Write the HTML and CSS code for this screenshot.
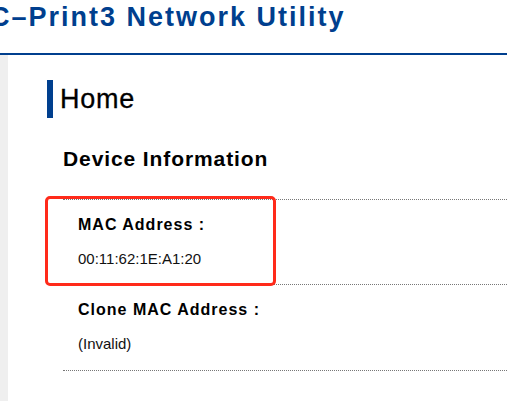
FILE: index.html
```html
<!DOCTYPE html>
<html lang="en">
<head>
<meta charset="utf-8">
<title>C-Print3 Network Utility</title>
<link rel="stylesheet" href="styles.css">
</head>
<body>
<header class="topbar">
  <h1 class="app-title">C–Print3 Network Utility</h1>
</header>
<div class="layout">
  <aside class="sidebar"></aside>
  <main class="main">
    <h2 class="page-title">Home</h2>
    <section class="section">
      <h3 class="section-title">Device Information</h3>
      <div class="info-list">
        <div class="info-item">
          <div class="info-label">MAC Address :</div>
          <div class="info-value">00:11:62:1E:A1:20</div>
        </div>
        <div class="info-item">
          <div class="info-label">Clone MAC Address :</div>
          <div class="info-value">(Invalid)</div>
        </div>
      </div>
    </section>
  </main>
</div>
<div class="highlight"></div>
</body>
</html>
```
FILE: styles.css
```css
* { box-sizing: border-box; }
html, body { margin: 0; padding: 0; }
body {
  width: 507px;
  height: 401px;
  overflow: hidden;
  background: #fff;
  font-family: "Liberation Sans", Arial, sans-serif;
  color: #000;
  position: relative;
}
.topbar {
  height: 55px;
  padding-top: 2px;
  border-bottom: 2px solid #003f8e;
  white-space: nowrap;
}
.app-title {
  margin: 0 0 0 -10px;
  font-size: 27px;
  line-height: 30px;
  font-weight: bold;
  letter-spacing: 2px;
  color: #003f8e;
}
.layout {
  display: flex;
  height: 346px;
}
.sidebar {
  width: 8px;
  flex: none;
  background: #efefef;
}
.main {
  flex: 1;
  padding-top: 25px;
  padding-left: 39px;
}
.page-title {
  margin: 0;
  height: 38px;
  border-left: 6px solid #003f8e;
  padding-left: 7px;
  font-size: 27px;
  line-height: 38px;
  font-weight: normal;
  letter-spacing: 0.75px;
  -webkit-text-stroke: 0.3px #000;
}
.section {
  margin-left: 16px;
}
.section-title {
  margin: 29px 0 28px;
  font-size: 21px;
  line-height: 24px;
  font-weight: bold;
  letter-spacing: 0.9px;
}
.info-item {
  border-top: 1px dotted #777;
  padding: 14.5px 0 15.5px 15px;
}
.info-item:last-child {
  border-bottom: 1px dotted #777;
}
.info-label {
  font-size: 16px;
  line-height: 20px;
  font-weight: bold;
  letter-spacing: 1px;
  margin-bottom: 14.3px;
}
.info-value {
  font-size: 15px;
  line-height: 20px;
  color: #111;
}
.highlight {
  position: absolute;
  left: 45px;
  top: 196px;
  width: 231px;
  height: 90px;
  border: 3px solid #ff2a1a;
  border-radius: 5px;
}
```
